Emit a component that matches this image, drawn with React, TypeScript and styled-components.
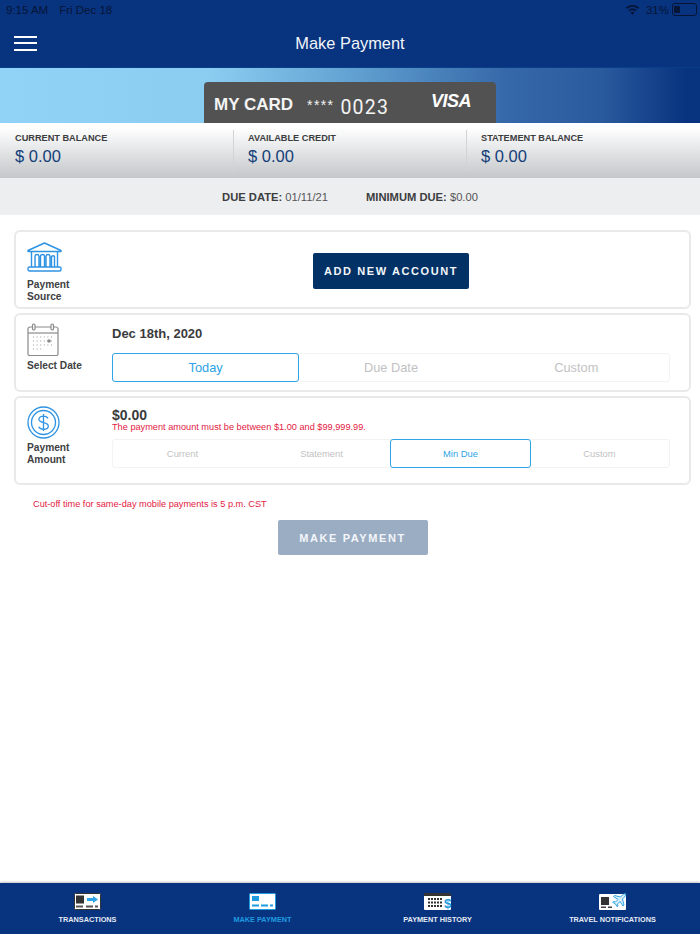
import { createGlobalStyle, styled } from "styled-components";

const GlobalStyle = createGlobalStyle`
  html, body {
    margin: 0;
    padding: 0;
    background: #fff;
    font-family: "Liberation Sans", Arial, sans-serif;
  }
`;

const Page = styled.div`
  display: flex;
  flex-direction: column;
  width: 700px;
  height: 934px;
  overflow: hidden;
`;

const TopBar = styled.header`
  height: 68px;
  background: #08337f;
  box-sizing: border-box;
  border-bottom: 1px solid #0b3f8c;
  display: flex;
  flex-direction: column;
`;

const StatusBar = styled.div`
  display: flex;
  align-items: center;
  height: 19px;
  padding: 0 3px 0 6px;
  font-size: 11.5px;
  color: #061536;
`;

const StatusDate = styled.span`
  margin-left: 11px;
  flex: 1;
`;

const StatusLevel = styled.span`
  margin-left: 7px;
`;

const Battery = styled.span`
  display: inline-flex;
  align-items: center;
  width: 21px;
  height: 9px;
  margin-left: 3px;
  padding: 1px;
  border: 1px solid #061536;
  border-radius: 3px;
  box-sizing: content-box;
  &::before {
    content: "";
    display: block;
    width: 6px;
    height: 7px;
    border-radius: 1px;
    background: #061536;
  }
`;

const NavRow = styled.div`
  flex: 1;
  display: grid;
  grid-template-columns: 1fr auto 1fr;
  align-items: center;
  padding: 0 14px;
`;

const Burger = styled.div`
  width: 23px;
  display: flex;
  flex-direction: column;
  gap: 4.5px;
  span {
    height: 2px;
    background: #fff;
  }
`;

const Title = styled.h1`
  margin: 0;
  font-size: 16.4px;
  font-weight: 400;
  color: #f2f5fa;
`;

const Hero = styled.section`
  height: 55px;
  box-sizing: border-box;
  padding-top: 14px;
  display: flex;
  justify-content: center;
  background: linear-gradient(
    90deg,
    #90d3f6 0%,
    #8bcdf1 30%,
    #62a2d2 50%,
    #3669a9 72%,
    #2a5a9e 86%,
    #08337f 98%
  );
`;

const CardFace = styled.div`
  width: 292px;
  box-sizing: border-box;
  padding: 5px 25px 0 10px;
  display: flex;
  align-items: center;
  background: #525252;
  border-radius: 4px 4px 0 0;
  color: #f4f4f4;
`;

const CardName = styled.span`
  font-size: 17px;
  font-weight: 700;
`;

const CardStars = styled.span`
  font-size: 14px;
  margin-left: 14px;
  letter-spacing: 1.4px;
`;

const CardDigits = styled.span`
  font-family: Roboto, sans-serif;
  font-size: 19.5px;
  font-weight: 400;
  letter-spacing: 1.2px;
  margin-left: 6px;
  padding-top: 5px;
  flex: 1;
`;

const VisaMark = styled.span`
  font-size: 18px;
  font-weight: 700;
  font-style: italic;
  letter-spacing: -0.5px;
  color: #fff;
  margin-top: -7px;
`;

const Balances = styled.section`
  height: 55px;
  display: grid;
  grid-template-columns: 233px 233px 234px;
  background: linear-gradient(180deg, #fff 8%, #eeeff0 35%, #c4c6c9 100%);
`;

const BalanceCell = styled.div<{ $divider?: boolean }>`
  margin: 7px 0 6px;
  padding-left: ${(p) => (p.$divider ? "14px" : "15px")};
  border-left: ${(p) => (p.$divider ? "1px solid #d2d3d5" : "none")};
`;

const BalanceLabel = styled.div`
  font-size: 9.2px;
  font-weight: 700;
  line-height: 13px;
  margin-top: 2px;
  color: #3c3d3f;
`;

const BalanceValue = styled.div`
  font-size: 16.5px;
  line-height: 22px;
  color: #144079;
`;

const DueStrip = styled.section`
  height: 37px;
  display: flex;
  justify-content: center;
  align-items: center;
  gap: 38px;
  background: #edeef0;
  font-size: 11.2px;
  color: #555;
  b {
    color: #3c3d3f;
  }
`;

const Main = styled.main`
  flex: 1;
  padding: 15px 9px 0 14px;
  display: flex;
  flex-direction: column;
  gap: 4px;
`;

const Panel = styled.div<{ $height: number }>`
  height: ${(p) => p.$height}px;
  box-sizing: border-box;
  border: 2px solid #e9e9e9;
  border-radius: 6px;
  padding: 8px 19px 0 11px;
  display: grid;
  grid-template-columns: 85px 1fr;
`;

const Side = styled.div`
  display: flex;
  flex-direction: column;
  align-items: flex-start;
`;

const BankSlot = styled.div`
  margin-top: 2px;
  height: 30px;
`;

const SideLabel = styled.div<{ $gap: number }>`
  margin-top: ${(p) => p.$gap}px;
  font-size: 10.2px;
  font-weight: 700;
  line-height: 12px;
  color: #404143;
`;

const CenterBody = styled.div`
  display: flex;
  justify-content: center;
  padding-top: 13px;
`;

const DarkButton = styled.button`
  width: 156px;
  height: 36px;
  border: none;
  border-radius: 2px;
  background: #023265;
  color: #f3f6fa;
  font-family: inherit;
  font-size: 11px;
  font-weight: 700;
  letter-spacing: 1.6px;
`;

const Body = styled.div`
  display: flex;
  flex-direction: column;
`;

const DateText = styled.div`
  font-size: 13px;
  font-weight: 700;
  line-height: 16px;
  margin-top: 3px;
  color: #3a3b3d;
`;

const AmountText = styled.div`
  font-size: 14px;
  font-weight: 700;
  line-height: 14px;
  margin-top: 2px;
  color: #3a3b3d;
`;

const ErrorText = styled.div`
  font-size: 9.2px;
  line-height: 11px;
  color: #e3193f;
`;

const Segments = styled.div<{ $count: number; $top: number }>`
  display: grid;
  grid-template-columns: repeat(${(p) => p.$count}, 1fr);
  height: 29px;
  margin-top: ${(p) => p.$top}px;
  border: 1px solid #f3f3f3;
  border-radius: 3px;
  box-sizing: border-box;
`;

const Segment = styled.div<{ $active?: boolean; $small?: boolean }>`
  display: flex;
  align-items: center;
  justify-content: center;
  margin: -1px;
  font-size: ${(p) => (p.$small ? "9.4px" : "12.8px")};
  color: ${(p) => (p.$active ? "#2ea3e6" : "#c2c2c2")};
  border: 1px solid ${(p) => (p.$active ? "#2ea3e6" : "transparent")};
  border-radius: 3px;
`;

const CutOff = styled.p`
  margin: 10px 0 0 19px;
  font-size: 9.2px;
  line-height: 11px;
  color: #e3193f;
`;

const SubmitRow = styled.div`
  display: flex;
  justify-content: center;
  margin-top: 6px;
`;

const SubmitButton = styled.button`
  width: 150px;
  height: 35px;
  border: none;
  border-radius: 2px;
  background: #9badc3;
  color: #f3f6fa;
  font-family: inherit;
  font-size: 11px;
  font-weight: 700;
  letter-spacing: 1.6px;
`;

const TabBar = styled.nav`
  height: 51px;
  box-sizing: border-box;
  padding-top: 10px;
  display: grid;
  grid-template-columns: repeat(4, 1fr);
  background: #08337f;
  box-shadow: 0 -1px 2px rgba(0, 0, 0, 0.25);
`;

const Tab = styled.div<{ $active?: boolean }>`
  display: flex;
  flex-direction: column;
  align-items: center;
  font-size: 7.3px;
  font-weight: 700;
  color: ${(p) => (p.$active ? "#1f9be0" : "#e6ebf4")};
  span {
    margin-top: 5px;
    line-height: 10px;
  }
`;

const BLUE = "#2f93e3";

const BankIcon = () => (
  <svg width="35" height="30" viewBox="0 0 35 30" fill="none" stroke={BLUE} strokeWidth="1.4">
    <path d="M1 8.500 17.500 1 34 8.500v1H1z" strokeLinejoin="round" />
    <path d="M4.500 10v15M30.500 10v15" />
    <path d="M8 25V14.500a2 2 0 0 1 4 0V25M13.500 25V14.500a2 2 0 0 1 4 0V25M19 25V14.500a2 2 0 0 1 4 0V25M24.500 25V14.500a2 2 0 0 1 3 0V25" />
    <rect x="1" y="25" width="33" height="4" rx="1.500" />
  </svg>
);

const CalendarIcon = () => (
  <svg width="32" height="33" viewBox="0 0 32 33" fill="none" stroke="#8a8a8a" strokeWidth="1.2">
    <path d="M8 4h16M5.500 4H3a2 2 0 0 0-2 2v25a1.500 1.500 0 0 0 1.500 1.500h27A1.500 1.500 0 0 0 31 31V6a2 2 0 0 0-2-2h-2.500" />
    <path d="M1 10h30" />
    <rect x="5.500" y="1" width="2.500" height="6" rx="1.200" />
    <rect x="24" y="1" width="2.500" height="6" rx="1.200" />
    <path
      d="M6 14h19M6 18h19M6 22h19M6 26h10"
      stroke="#9a9a9a"
      strokeWidth="1"
      strokeDasharray="1 2.600"
    />
    <circle cx="22" cy="18" r="1.800" fill="#8a8a8a" stroke="none" />
  </svg>
);

const DollarIcon = () => (
  <svg width="33" height="33" viewBox="0 0 33 33" fill="none" stroke={BLUE} strokeWidth="1.3">
    <circle cx="16.500" cy="16.500" r="15.500" />
    <circle cx="16.500" cy="16.500" r="12" />
    <path d="M21 12.500c-.7-1.500-2.400-2.400-4.500-2.400-2.700 0-4.600 1.300-4.600 3.200 0 4.500 9.400 2 9.400 6.700 0 2-2 3.300-4.800 3.300-2.200 0-4-.9-4.800-2.500M16.500 8v17" />
  </svg>
);

const WifiIcon = () => (
  <svg width="13" height="10" viewBox="0 0 13 10" fill="#061536">
    <path d="M6.500 0C4 0 1.800 1 0 2.600l1.200 1.300C2.600 2.600 4.500 1.800 6.500 1.800s3.900.8 5.300 2.100L13 2.600C11.200 1 9 0 6.500 0z" />
    <path d="M6.500 3.400c-1.600 0-3 .6-4.100 1.600l1.200 1.300c.8-.7 1.800-1.100 2.900-1.100s2.100.4 2.900 1.100L10.600 5c-1.100-1-2.500-1.600-4.100-1.600z" />
    <path d="M6.500 6.700c-.8 0-1.500.3-2 .8l2 2.500 2-2.500c-.5-.5-1.200-.8-2-.8z" />
  </svg>
);

const TransactionsIcon = () => (
  <svg width="27" height="17" viewBox="0 0 27 17">
    <rect x="0.500" y="0.500" width="26" height="16" rx="1" fill="#fff" stroke="#333" />
    <rect x="2" y="2.500" width="8" height="8" fill="#333" />
    <path d="M13 5h6V3l5 3.500L19 10V8h-6z" fill="#2ea3e6" />
    <path d="M2 12.500h7v2H2zM12 12.500h7v2h-7zM21 12.500h3v2h-3z" fill="#555" />
  </svg>
);

const PaymentIcon = () => (
  <svg width="27" height="17" viewBox="0 0 27 17">
    <rect x="0.500" y="0.500" width="26" height="16" rx="1" fill="#fff" stroke="#1f9be0" />
    <rect x="3" y="3" width="7" height="5" fill="#1f9be0" />
    <path d="M3 11.500h7v2H3zM12 11.500h7v2h-7zM21 11.500h3v2h-3z" fill="#1f9be0" />
  </svg>
);

const HistoryIcon = () => (
  <svg width="28" height="17" viewBox="0 0 28 17">
    <rect x="0" y="0" width="27" height="17" rx="1" fill="#fff" />
    <rect x="0" y="0" width="27" height="3" fill="#333" />
    <path d="M4 6h15M4 9.500h15M4 13h15" stroke="#333" strokeWidth="2.200" strokeDasharray="2 1" />
    <text
      x="20"
      y="15"
      fontFamily="Liberation Sans, sans-serif"
      fontSize="13.500"
      fontWeight="700"
      fill="#1f9be0"
    >
      $
    </text>
  </svg>
);

const TravelIcon = () => (
  <svg width="28" height="17" viewBox="0 0 28 17">
    <rect x="0" y="1" width="27" height="16" rx="1" fill="#fff" />
    <rect x="2" y="4" width="8" height="8" fill="#333" />
    <path d="M2 13.500h5v1.500H2zM9 13.500h4v1.500H9z" fill="#444" />
    <path
      d="M27 1.500c-1-1-2.500-.5-3.500.5l-2 2-6-1.500-1 1 4.500 3-2.500 2.500-2-.5-.8.8 2.800 1.700 1.700 2.800.8-.8-.5-2 2.500-2.500 3 4.500 1-1-1.500-6 2-2c1-1 1.500-2.500.5-3.500z"
      fill="#d9eefb"
      stroke="#2ea3e6"
      strokeWidth="1"
    />
  </svg>
);

const tabs = [
  { label: "TRANSACTIONS", icon: <TransactionsIcon /> },
  { label: "MAKE PAYMENT", icon: <PaymentIcon />, active: true },
  { label: "PAYMENT HISTORY", icon: <HistoryIcon /> },
  { label: "TRAVEL NOTIFICATIONS", icon: <TravelIcon /> },
];

const balances = ["CURRENT BALANCE", "AVAILABLE CREDIT", "STATEMENT BALANCE"];

export default function App() {
  return (
    <>
      <GlobalStyle />
      <Page>
        <TopBar>
          <StatusBar>
            <span>9:15 AM</span>
            <StatusDate>Fri Dec 18</StatusDate>
            <WifiIcon />
            <StatusLevel>31%</StatusLevel>
            <Battery />
          </StatusBar>
          <NavRow>
            <Burger>
              <span />
              <span />
              <span />
            </Burger>
            <Title>Make Payment</Title>
          </NavRow>
        </TopBar>

        <Hero>
          <CardFace>
            <CardName>MY CARD</CardName>
            <CardStars>****</CardStars>
            <CardDigits>0023</CardDigits>
            <VisaMark>VISA</VisaMark>
          </CardFace>
        </Hero>

        <Balances>
          {balances.map((label, i) => (
            <BalanceCell key={label} $divider={i > 0}>
              <BalanceLabel>{label}</BalanceLabel>
              <BalanceValue>$ 0.00</BalanceValue>
            </BalanceCell>
          ))}
        </Balances>

        <DueStrip>
          <span>
            <b>DUE DATE:</b> 01/11/21
          </span>
          <span>
            <b>MINIMUM DUE:</b> $0.00
          </span>
        </DueStrip>

        <Main>
          <Panel $height={79}>
            <Side>
              <BankSlot>
                <BankIcon />
              </BankSlot>
              <SideLabel $gap={7}>
                Payment
                <br />
                Source
              </SideLabel>
            </Side>
            <CenterBody>
              <DarkButton>ADD NEW ACCOUNT</DarkButton>
            </CenterBody>
          </Panel>

          <Panel $height={79}>
            <Side>
              <CalendarIcon />
              <SideLabel $gap={4}>Select Date</SideLabel>
            </Side>
            <Body>
              <DateText>Dec 18th, 2020</DateText>
              <Segments $count={3} $top={11}>
                <Segment $active>Today</Segment>
                <Segment>Due Date</Segment>
                <Segment>Custom</Segment>
              </Segments>
            </Body>
          </Panel>

          <Panel $height={89}>
            <Side>
              <DollarIcon />
              <SideLabel $gap={3}>
                Payment
                <br />
                Amount
              </SideLabel>
            </Side>
            <Body>
              <AmountText>$0.00</AmountText>
              <ErrorText>The payment amount must be between $1.00 and $99,999.99.</ErrorText>
              <Segments $count={4} $top={6}>
                <Segment $small>Current</Segment>
                <Segment $small>Statement</Segment>
                <Segment $small $active>
                  Min Due
                </Segment>
                <Segment $small>Custom</Segment>
              </Segments>
            </Body>
          </Panel>

          <CutOff>Cut-off time for same-day mobile payments is 5 p.m. CST</CutOff>
          <SubmitRow>
            <SubmitButton>MAKE PAYMENT</SubmitButton>
          </SubmitRow>
        </Main>

        <TabBar>
          {tabs.map((tab) => (
            <Tab key={tab.label} $active={tab.active}>
              {tab.icon}
              <span>{tab.label}</span>
            </Tab>
          ))}
        </TabBar>
      </Page>
    </>
  );
}
